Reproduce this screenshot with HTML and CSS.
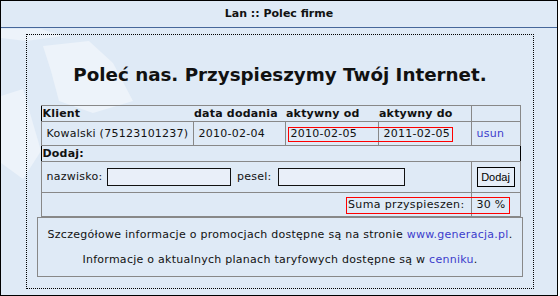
FILE: index.html
```html
<!DOCTYPE html>
<html lang="pl">
<head>
  <meta charset="UTF-8" />
  <title>Lan :: Polec firme</title>
  <link rel="stylesheet" href="styles.css">
</head>
<body>

<div class="frame">
  <svg class="watermark" width="556" height="294" viewBox="0 0 556 294">
    <polygon points="0,28 40,28 62,35 25,40 0,37" />
    <polygon points="42,45 88,40 112,62 132,100 92,112 58,100 50,70" />
    <polygon points="0,95 22,88 40,150 22,178 0,162" />
  </svg>

  <div class="header">Lan :: Polec firme</div>

  <div class="content">
    <h1 class="title">Poleć nas. Przyspieszymy Twój Internet.</h1>

    <div class="table-wrap">
      <table class="clients">
        <colgroup>
          <col style="width:152px" />
          <col style="width:92px" />
          <col style="width:93px" />
          <col style="width:93px" />
          <col style="width:49px" />
        </colgroup>
        <tr class="head">
          <th>Klient</th>
          <th>data dodania</th>
          <th>aktywny od</th>
          <th>aktywny do</th>
          <td class="sep"></td>
        </tr>
        <tr class="row">
          <td>Kowalski (75123101237)</td>
          <td>2010-02-04</td>
          <td>2010-02-05</td>
          <td>2011-02-05</td>
          <td><a href="#">usun</a></td>
        </tr>
        <tr class="head">
          <th colspan="5">Dodaj:</th>
        </tr>
        <tr class="add">
          <td colspan="4">
            nazwisko: <input type="text" class="name" />
            pesel: <input type="text" class="pesel" />
          </td>
          <td><button>Dodaj</button></td>
        </tr>
        <tr class="row sum">
          <td colspan="4" class="sum-label">Suma przyspieszen:</td>
          <td>30 %</td>
        </tr>
      </table>
      <div class="mark mark-dates"></div>
      <div class="mark mark-sum"></div>
    </div>

    <div class="info">
      <p>Szczegółowe informacje o promocjach dostępne są na stronie <a href="#">www.generacja.pl</a>.</p>
      <p>Informacje o aktualnych planach taryfowych dostępne są w <a href="#">cenniku</a>.</p>
    </div>
  </div>
</div>

</body>
</html>
```

FILE: styles.css
```css
body { margin: 0; font-family: "DejaVu Sans", Verdana, sans-serif; font-size: 11px; color: #111; background: #fff; }

.frame {
  position: relative;
  width: 556px; height: 294px;
  border: 1px solid #000;
  background: #dfeaf6;
}
.watermark { position: absolute; top: 0; left: 0; }
.watermark polygon { fill: #edf3fa; }

.header {
  position: relative;
  height: 26px; line-height: 26px;
  border-bottom: 1px solid #46679a;
  text-align: center; font-weight: bold;
}

.content {
  position: relative;
  width: 506px; height: 253px;
  margin: 6px 0 0 25px;
  border: 1px dotted #000;
}

.title {
  margin: 28px 0 18px; line-height: 24px;
  font-size: 18.3px; text-align: center; color: #111;
}

.table-wrap { position: relative; width: 479px; margin: 0 auto; }
.clients {
  width: 479px; table-layout: fixed;
  border-collapse: collapse;
  border: 1px solid #000;
  letter-spacing: 0.25px;
}
.clients td, .clients th { padding: 0 5px; border: 1px solid #888; text-align: left; white-space: nowrap; }
.clients .head th { padding: 0 1px; height: 15px; border-left: none; border-right: none; letter-spacing: 0.2px; }
.clients .head .sep { border-left: 1px solid #888; }
.clients .row td { height: 23px; }
.clients .add td { height: 30px; }
.clients .sum td { border-top: 1px solid #888; }
.clients .sum-label { text-align: right; padding-right: 6px; letter-spacing: 0.35px; }

a { color: #3c3ccc; text-decoration: none; }

.add input {
  width: 124px; height: 18px; box-sizing: border-box;
  margin: 0 2px 0 1px; padding: 0; vertical-align: middle;
  border: 1px solid #111; background: #e9eff9;
}
.add input.pesel { width: 127px; margin-left: 3px; }
.add button {
  height: 20px; width: 38px; padding: 0;
  border: 1px solid #000; background: #e6eef8;
  font-family: "Liberation Sans", Arial, sans-serif; font-size: 11px; letter-spacing: 0;
}

.mark { position: absolute; border: 1px solid #f00; }
.mark-dates { left: 247px; top: 22px; width: 163px; height: 13px; }
.mark-sum { left: 305px; top: 92px; width: 162px; height: 15px; }

.info {
  width: 484px; margin: 0 auto;
  border: 1px solid #888;
  padding: 10px 0 9px;
  text-align: center;
  letter-spacing: 0.27px;
}
.info p { margin: 0; line-height: 14px; }
.info p + p { margin-top: 11px; }
```
